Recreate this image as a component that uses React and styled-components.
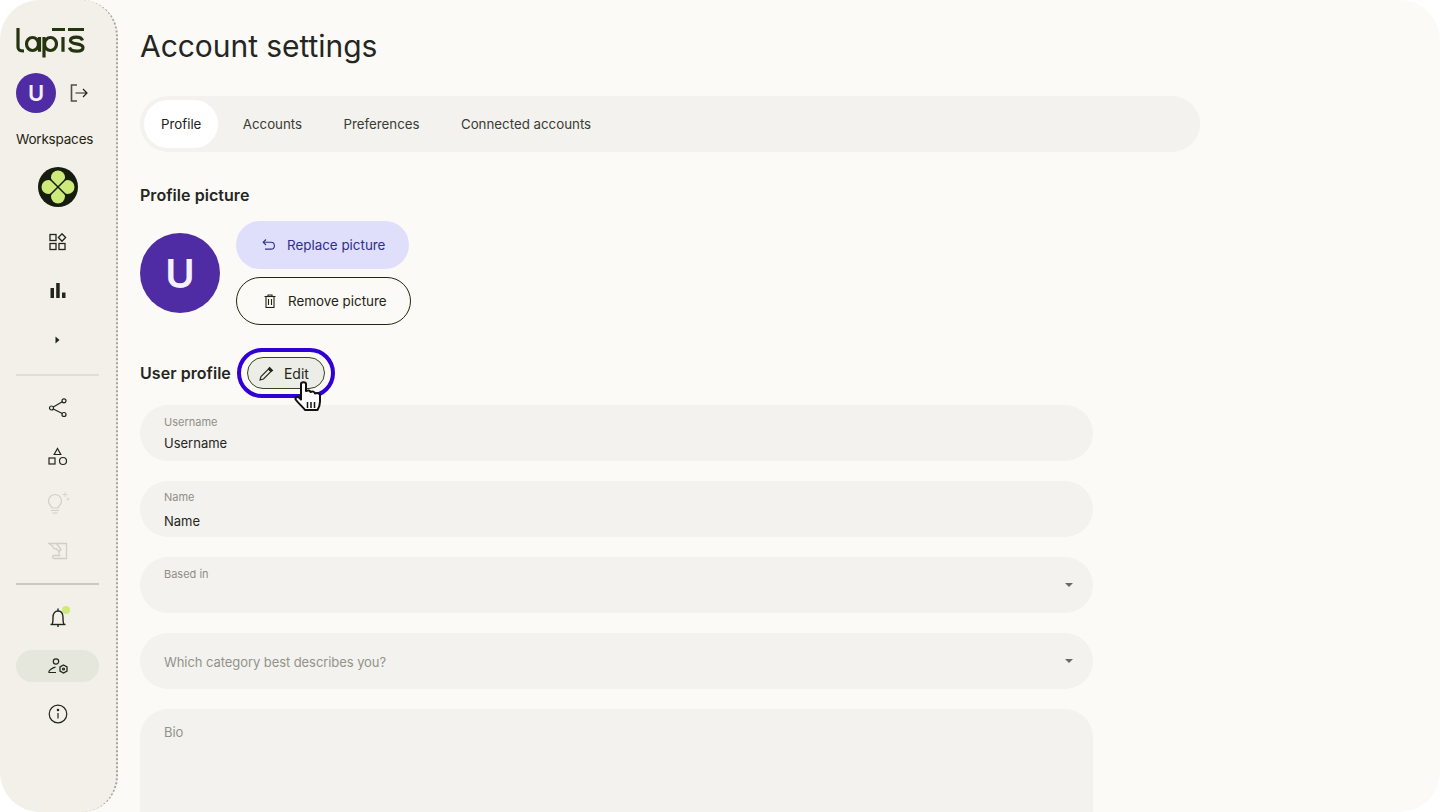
import React from 'react';
import styled, { createGlobalStyle } from 'styled-components';

const GlobalStyle = createGlobalStyle`
	html, body {
		margin: 0;
		padding: 0;
		height: 100%;
		background: #ffffff;
		overflow: hidden;
	}

	* {
		box-sizing: border-box;
	}

	#root {
		height: 100%;
	}
`;

const Shell = styled.div`
	width: 1440px;
	height: 812px;
	display: flex;
	overflow: hidden;
	border-radius: 40px;
	background: #fbfaf6;
	font-family: Inter, 'Noto Sans', sans-serif;
	color: #1b1c14;
`;

const Sidebar = styled.aside`
	flex: 0 0 118px;
	height: 812px;
	padding: 28px 17px 0 16px;
	display: flex;
	flex-direction: column;
	background: #f2f0e9;
	border-right: 2px dotted #a5a5a0;
	border-radius: 0 36px 36px 0;
`;

const Logo = styled.div`
	height: 31px;
	margin-bottom: 14px;
	color: #26330f;
`;

const UserRow = styled.div`
	display: flex;
	align-items: center;
	gap: 13px;
`;

const Avatar = styled.div`
	width: ${(p) => p.$size}px;
	height: ${(p) => p.$size}px;
	flex: none;
	display: flex;
	align-items: center;
	justify-content: center;
	border-radius: 50%;
	background: #4f2ca3;
	color: #f6f2fd;
	font-size: ${(p) => p.$font}px;
	font-weight: 600;
`;

const Workspaces = styled.div`
	margin-top: 16px;
	font-size: 13.5px;
	line-height: 20px;
	letter-spacing: -0.2px;
	white-space: nowrap;
	color: #1f2413;
`;

const WorkspaceMark = styled.div`
	height: 40px;
	margin-top: 18px;
	display: flex;
	justify-content: center;
`;

const NavItem = styled.div`
	height: ${(p) => p.$height || 32}px;
	margin-top: ${(p) => p.$top || 0}px;
	display: flex;
	align-items: center;
	justify-content: center;
	border-radius: 16px;
	background: ${(p) => (p.$active ? '#e6e7dc' : 'transparent')};
	color: ${(p) => (p.$muted ? '#cfcfc8' : '#20261a')};
`;

const NotifyItem = styled(NavItem)`
	position: relative;
`;

const NotifyDot = styled.span`
	position: absolute;
	left: 46px;
	top: 4px;
	width: 8px;
	height: 8px;
	border-radius: 50%;
	background: #cdea7b;
`;

const Divider = styled.div`
	height: 2px;
	margin-top: ${(p) => p.$top}px;
	background: ${(p) => p.$color};
`;

const Main = styled.main`
	flex: 1;
	padding: 26px 0 0 22px;
	min-width: 0;
`;

const Title = styled.h1`
	margin: 0;
	font-size: 30px;
	line-height: 40px;
	font-weight: 400;
	letter-spacing: -0.05px;
	color: #25261f;
`;

const Tabs = styled.nav`
	width: 1060px;
	height: 56px;
	margin-top: 30px;
	padding: 4px;
	display: flex;
	border-radius: 28px;
	background: #f3f2ee;
`;

const Tab = styled.div`
	height: 48px;
	padding: 0 17px;
	margin-right: 7.4px;
	display: flex;
	align-items: center;
	border-radius: 24px;
	background: ${(p) => (p.$active ? '#ffffff' : 'transparent')};
	font-size: 13.3px;
	color: ${(p) => (p.$active ? '#1f201a' : '#3a3b35')};
`;

const SectionTitle = styled.h2`
	margin: 0;
	font-size: 16px;
	line-height: 24px;
	font-weight: 600;
	letter-spacing: 0.05px;
	color: #25261f;
`;

const PictureTitle = styled(SectionTitle)`
	margin-top: 31px;
`;

const PictureRow = styled.div`
	margin-top: 14px;
	display: flex;
	align-items: center;
	gap: 16px;
`;

const PictureActions = styled.div`
	display: flex;
	flex-direction: column;
	align-items: flex-start;
	gap: 8px;
`;

const PillButton = styled.button`
	height: 48px;
	width: ${(p) => p.$width}px;
	padding: 0 0 0 26px;
	display: flex;
	align-items: center;
	gap: 11px;
	border-radius: 24px;
	border: ${(p) => (p.$outlined ? '1px solid #22280f' : 'none')};
	background: ${(p) => (p.$outlined ? 'transparent' : '#dfdffb')};
	color: ${(p) => (p.$outlined ? '#1f2413' : '#2f2e8c')};
	font-family: inherit;
	font-size: 13.4px;
`;

const ProfileHeader = styled.div`
	margin-top: 23px;
	display: flex;
	align-items: center;
	gap: 6px;
`;

const EditRing = styled.div`
	position: relative;
	z-index: 1;
	padding: 5px 6px;
	border: 4px solid #3000d4;
	border-radius: 26px;
`;

const EditButton = styled.button`
	width: 78px;
	height: 32px;
	padding: 0 0 0 11px;
	display: flex;
	align-items: center;
	gap: 10px;
	border: 1px solid #3a4220;
	border-radius: 16px;
	background: #ecede6;
	color: #22261a;
	font-family: inherit;
	font-size: 14px;
`;

const Pointer = styled.svg`
	position: absolute;
	left: 53px;
	top: 29px;
`;

const Fields = styled.div`
	width: 953px;
	margin-top: 7px;
	display: flex;
	flex-direction: column;
	gap: 20px;
`;

const Field = styled.div`
	position: relative;
	height: ${(p) => p.$height || 56}px;
	padding: ${(p) => p.$top || 10}px 24px 0;
	border-radius: 28px;
	background: #f3f2ee;
`;

const FieldLabel = styled.div`
	font-size: 11px;
	line-height: 14px;
	color: #8f8f88;
`;

const FieldValue = styled.div`
	margin-top: ${(p) => p.$top}px;
	font-size: 13px;
	line-height: 18px;
	color: #25261f;
`;

const Placeholder = styled.div`
	margin-top: ${(p) => p.$top}px;
	font-size: 13px;
	line-height: 18px;
	letter-spacing: -0.07px;
	color: #92928b;
`;

const Caret = styled.span`
	position: absolute;
	right: 20px;
	top: 26px;
	width: 0;
	height: 0;
	border-left: 4px solid transparent;
	border-right: 4px solid transparent;
	border-top: 4px solid #6a6a64;
`;

const LapisLogo = () => (
	<svg width="70" height="30" viewBox="0 0 70 30" fill="none" stroke="currentColor" strokeWidth="3.2">
		<path d="M2 0v19c0 3 1.500 4 6 4" />
		<ellipse cx="16.500" cy="16" rx="6" ry="6.500" />
		<path d="M23.500 9v14.800" />
		<path d="M28 9v20.500" />
		<ellipse cx="34.500" cy="16" rx="6" ry="6.500" />
		<path d="M36 1.500h13" />
		<path d="M47 9v14.800" />
		<path d="M52 1.500h16" />
		<path d="M66.500 12.500c-.8-2.200-3-3.300-6-3.300-3.500 0-6 1.300-6 3.300 0 4.800 12.500 2 12.500 7 0 2.500-2.800 3.700-6.300 3.700-3.500 0-6.500-1.200-7.200-3.700" />
	</svg>
);

const LogoutIcon = () => (
	<svg width="20" height="20" viewBox="0 0 20 20" fill="none" stroke="#20261a" strokeWidth="1.200">
		<path d="M8 2H2.500v16H8" stroke="#4c5046" strokeWidth="1.600" />
		<path d="M6.500 10H18M14 6l4 4-4 4" />
	</svg>
);

const CloverIcon = () => (
	<svg width="40" height="40" viewBox="0 0 40 40">
		<circle cx="20" cy="20" r="20" fill="#171d0d" />
		<g fill="#cdea7b">
			<circle cx="20" cy="10.500" r="7" />
			<circle cx="20" cy="29.500" r="7" />
			<circle cx="10.500" cy="20" r="7" />
			<circle cx="29.500" cy="20" r="7" />
			<rect x="15" y="15" width="10" height="10" />
		</g>
		<path d="M12 12l16 16M28 12L12 28" stroke="#171d0d" strokeWidth="1.500" strokeLinecap="round" />
	</svg>
);

const GridIcon = () => (
	<svg width="18" height="18" viewBox="0 0 18 18" fill="none" stroke="currentColor" strokeWidth="1.300">
		<rect x="1" y="1.500" width="6" height="6" />
		<rect x="1" y="10.500" width="6" height="6" />
		<rect x="10" y="10.500" width="6" height="6" />
		<path d="M13 0.800l3.600 3.700-3.600 3.700-3.600-3.700z" />
	</svg>
);

const BarsIcon = () => (
	<svg width="16" height="16" viewBox="0 0 16 16" fill="currentColor">
		<rect x="0.500" y="6" width="3.500" height="10" />
		<rect x="6.200" y="1" width="3.500" height="15" />
		<rect x="12" y="10.500" width="3.500" height="5.500" />
	</svg>
);

const ShareIcon = () => (
	<svg width="20" height="20" viewBox="0 0 20 20" fill="none" stroke="currentColor" strokeWidth="1.200">
		<circle cx="3.500" cy="10" r="2" />
		<circle cx="16" cy="2.800" r="2" />
		<circle cx="16" cy="16.500" r="2" />
		<path d="M5.300 9l9-5.200M5.300 11l9 4.500" />
	</svg>
);

const ShapesIcon = () => (
	<svg width="20" height="20" viewBox="0 0 20 20" fill="none" stroke="currentColor" strokeWidth="1.200">
		<path d="M9.500 1.500l3.300 6h-6.600z" />
		<rect x="1" y="11" width="6" height="6" />
		<circle cx="15" cy="14" r="3.500" />
	</svg>
);

const BulbIcon = () => (
	<svg width="24" height="24" viewBox="0 0 24 24" fill="none" stroke="currentColor" strokeWidth="1.200">
		<path d="M5 19.500h8M6.500 22h5" />
		<path d="M6 17c0-1.500-3.500-3-3.500-7a6.500 6.500 0 1 1 13 0c0 4-3.500 5.500-3.500 7z" />
		<path d="M19 1v5M16.500 3.500h5M22 6.500v3M20.500 8h3" strokeWidth="0.800" />
	</svg>
);

const SketchIcon = () => (
	<svg width="20" height="18" viewBox="0 0 20 18" fill="none" stroke="currentColor" strokeWidth="1.300">
		<path d="M8 1.500h10.500v15H6c-1 0-1.500-.8-1.500-1.600s.5-1.400 1.500-1.400h6.500" />
		<path d="M1 1.500h7.500l4.500 6-2 2L8.500 7c-2 .5-3.500-1-3.500-2.500L1 1.500z" />
		<path d="M11 9.500v3" />
	</svg>
);

const BellIcon = () => (
	<svg width="20" height="22" viewBox="0 0 20 22" fill="none" stroke="currentColor" strokeWidth="1.400">
		<path d="M2.500 17.500h15" />
		<path d="M4 17.500c1-1.500 1-3 1-7 0-4 2-6.500 5-6.500s5 2.500 5 6.500c0 4 0 5.500 1 7" />
		<path d="M10 1.500V4M10 18v2" />
	</svg>
);

const UserGearIcon = () => (
	<svg width="20" height="16" viewBox="0 0 20 16" fill="none" stroke="currentColor" strokeWidth="1.200">
		<circle cx="8" cy="3.500" r="2.700" />
		<path d="M1 15v-1.500c0-1 3-3.700 6.500-4.300M1 14.500h7" />
		<circle cx="15.500" cy="11" r="1" />
		<path d="M15.500 7l3.500 2v4l-3.500 2-3.500-2V9z" strokeWidth="1.300" />
	</svg>
);

const InfoIcon = () => (
	<svg width="20" height="20" viewBox="0 0 20 20" fill="none" stroke="currentColor" strokeWidth="1.200">
		<circle cx="10" cy="10" r="8.800" />
		<path d="M10 9v5.500" />
		<circle cx="10" cy="6" r="0.700" fill="currentColor" />
	</svg>
);

const UndoIcon = () => (
	<svg width="14" height="14" viewBox="0 0 14 14" fill="none" stroke="currentColor" strokeWidth="1.100">
		<path d="M4 1.500L1.200 4.300 4 7" />
		<path d="M1.500 4.300h7.500a3.400 3.400 0 0 1 0 6.800H3" />
	</svg>
);

const TrashIcon = () => (
	<svg width="14" height="14" viewBox="0 0 14 14" fill="none" stroke="currentColor" strokeWidth="1.100">
		<path d="M1.500 2.500h11M5 2.500V1h4v1.500" />
		<rect x="3" y="2.500" width="8" height="11" />
		<path d="M5.500 5v6M8.500 5v6" />
	</svg>
);

const PencilIcon = () => (
	<svg width="15" height="15" viewBox="0 0 15 15" fill="none" stroke="currentColor" strokeWidth="1.100">
		<path d="M1 14l1-3.500 7.500-7.500 2.500 2.500L4.500 13z" />
		<path d="M10.500 1.500l3 3-1.500 1-2.500-2.500z" fill="currentColor" />
	</svg>
);

const HandPointer = () => (
	<Pointer width="30" height="32" viewBox="0 0 30 32">
		<path
			d="M7 3c0-2.500 5-2.500 5 0v7c2-1 4-.5 4.500 1 2-1 4-.5 4.500 1.500 2-1 5-.5 5 2v6c0 3-1 6-2.500 8.500H11c-2-3-6-6-9-10-1.500-2 1-4 3-2.500l2 2z"
			fill="#ffffff"
			stroke="#111111"
			strokeWidth="2"
			strokeLinejoin="round"
		/>
		<path d="M13.500 21v6M17 21v6M20.500 21v6" stroke="#111111" strokeWidth="1.500" />
	</Pointer>
);

export default function App() {
	return (
		<>
			<GlobalStyle />
			<Shell>
				<Sidebar>
					<Logo>
						<LapisLogo />
					</Logo>
					<UserRow>
						<Avatar $size={40} $font={22}>U</Avatar>
						<LogoutIcon />
					</UserRow>
					<Workspaces>Workspaces</Workspaces>
					<WorkspaceMark>
						<CloverIcon />
					</WorkspaceMark>
					<NavItem $top={19}>
						<GridIcon />
					</NavItem>
					<NavItem $top={16}>
						<BarsIcon />
					</NavItem>
					<NavItem $top={18}>
						<svg width="5" height="8" viewBox="0 0 5 8" fill="#20261a">
							<path d="M0.500 0.500L4.500 4 0.500 7.500z" />
						</svg>
					</NavItem>
					<Divider $top={18} $color="#dfded7" />
					<NavItem $top={16}>
						<ShareIcon />
					</NavItem>
					<NavItem $top={17}>
						<ShapesIcon />
					</NavItem>
					<NavItem $top={14} $muted>
						<BulbIcon />
					</NavItem>
					<NavItem $top={16} $muted>
						<SketchIcon />
					</NavItem>
					<Divider $top={16} $color="#c9c9c1" />
					<NotifyItem $top={17}>
						<BellIcon />
						<NotifyDot />
					</NotifyItem>
					<NavItem $top={16} $active>
						<UserGearIcon />
					</NavItem>
					<NavItem $top={16}>
						<InfoIcon />
					</NavItem>
				</Sidebar>
				<Main>
					<Title>Account settings</Title>
					<Tabs>
						<Tab $active>Profile</Tab>
						<Tab>Accounts</Tab>
						<Tab>Preferences</Tab>
						<Tab>Connected accounts</Tab>
					</Tabs>
					<PictureTitle>Profile picture</PictureTitle>
					<PictureRow>
						<Avatar $size={80} $font={40}>U</Avatar>
						<PictureActions>
							<PillButton $width={173}>
								<UndoIcon />
								Replace picture
							</PillButton>
							<PillButton $width={175} $outlined>
								<TrashIcon />
								Remove picture
							</PillButton>
						</PictureActions>
					</PictureRow>
					<ProfileHeader>
						<SectionTitle>User profile</SectionTitle>
						<EditRing>
							<EditButton>
								<PencilIcon />
								Edit
							</EditButton>
							<HandPointer />
						</EditRing>
					</ProfileHeader>
					<Fields>
						<Field>
							<FieldLabel>Username</FieldLabel>
							<FieldValue $top={5}>Username</FieldValue>
						</Field>
						<Field $top={9}>
							<FieldLabel>Name</FieldLabel>
							<FieldValue $top={8}>Name</FieldValue>
						</Field>
						<Field>
							<FieldLabel>Based in</FieldLabel>
							<Caret />
						</Field>
						<Field>
							<Placeholder $top={10}>Which category best describes you?</Placeholder>
							<Caret />
						</Field>
						<Field $height={200}>
							<Placeholder $top={4}>Bio</Placeholder>
						</Field>
					</Fields>
				</Main>
			</Shell>
		</>
	);
}
